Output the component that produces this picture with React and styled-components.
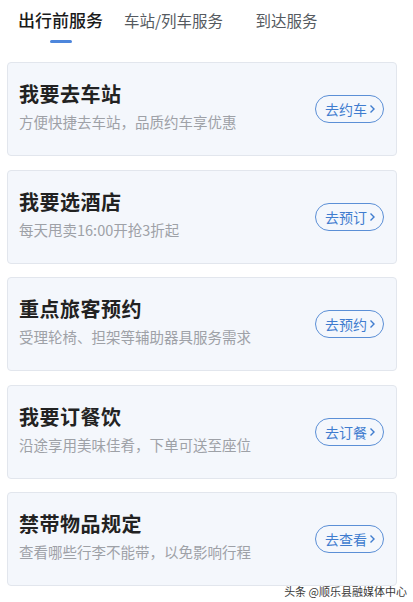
import React from 'react';
import styled, { createGlobalStyle } from 'styled-components';

const GlobalStyle = createGlobalStyle`
  body {
    margin: 0;
    background: #ffffff;
    font-family: "Noto Sans CJK SC", "Noto Sans", "Liberation Sans", sans-serif;
  }
`;

const Page = styled.div`
  position: relative;
  width: 413px;
  height: 602px;
  overflow: hidden;
  background: #ffffff;
`;

const TabBar = styled.div`
  display: flex;
  padding: 0 0 0 4px;
  height: 62px;
  box-sizing: border-box;
`;

const Tab = styled.div`
  width: 113px;
  display: flex;
  flex-direction: column;
  align-items: center;
  padding-top: 8px;
  font-size: ${p => (p.active ? '17px' : '15.5px')};
  font-weight: ${p => (p.active ? 500 : 400)};
  color: ${p => (p.active ? '#1a1a1a' : '#555a60')};
  line-height: 24px;
`;

const Indicator = styled.div`
  width: 22px;
  height: 3px;
  border-radius: 2px;
  margin-top: 8px;
  background: #4d86dc;
  visibility: ${p => (p.show ? 'visible' : 'hidden')};
`;

const List = styled.div`
  display: flex;
  flex-direction: column;
  gap: 13.5px;
  padding: 0 16px 0 7px;
`;

const Card = styled.div`
  height: 94px;
  box-sizing: border-box;
  display: flex;
  align-items: center;
  justify-content: space-between;
  padding: 0 12px 0 11px;
  background: #f4f7fc;
  border: 1px solid #e2e6ed;
  border-radius: 4px;
`;

const Texts = styled.div`
  display: flex;
  flex-direction: column;
  gap: 4px;
  margin-top: -6px;
`;

const Title = styled.div`
  font-size: 20px;
  line-height: 28px;
  font-weight: 700;
  color: #222222;
  letter-spacing: 0.5px;
`;

const Sub = styled.div`
  font-size: 14.5px;
  line-height: 20px;
  color: #9ea1a7;
`;

const Action = styled.div`
  height: 28px;
  box-sizing: border-box;
  display: flex;
  align-items: center;
  gap: 2px;
  padding: 0 7px 0 9px;
  border: 1px solid #5b8fd6;
  border-radius: 14px;
  color: #3f7ccf;
  font-size: 14px;
  line-height: 20px;
  white-space: nowrap;
`;

const Mark = styled.div`
  position: absolute;
  right: 6px;
  bottom: 4px;
  font-size: 11px;
  line-height: 14px;
  color: #3a3a3a;
  text-shadow: 0 0 2px #ffffff, 0 0 2px #ffffff;
`;

const Chevron = () => (
  <svg width="7" height="10" viewBox="0 0 7 10">
    <path d="M1.5 1.5 L5 5 L1.5 8.5" fill="none" stroke="currentColor" strokeWidth="1.4" />
  </svg>
);

const tabs = ['出行前服务', '车站/列车服务', '到达服务'];

const services = [
  { title: '我要去车站', sub: '方便快捷去车站，品质约车享优惠', action: '去约车' },
  { title: '我要选酒店', sub: '每天甩卖16:00开抢3折起', action: '去预订' },
  { title: '重点旅客预约', sub: '受理轮椅、担架等辅助器具服务需求', action: '去预约' },
  { title: '我要订餐饮', sub: '沿途享用美味佳肴，下单可送至座位', action: '去订餐' },
  { title: '禁带物品规定', sub: '查看哪些行李不能带，以免影响行程', action: '去查看' },
];

export default function App() {
  return (
    <Page>
      <GlobalStyle />
      <TabBar>
        {tabs.map((t, i) => (
          <Tab key={t} active={i === 0}>
            {t}
            <Indicator show={i === 0} />
          </Tab>
        ))}
      </TabBar>
      <List>
        {services.map(item => (
          <Card key={item.title}>
            <Texts>
              <Title>{item.title}</Title>
              <Sub>{item.sub}</Sub>
            </Texts>
            <Action>
              {item.action}
              <Chevron />
            </Action>
          </Card>
        ))}
      </List>
      <Mark>头条 @顺乐县融媒体中心</Mark>
    </Page>
  );
}
